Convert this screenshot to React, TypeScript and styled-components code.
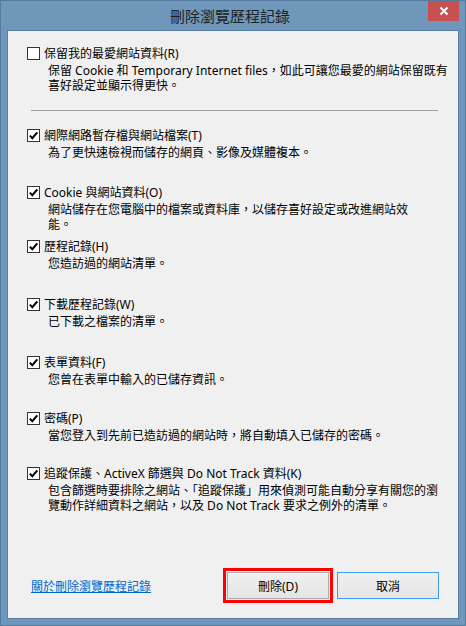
import React from "react";
import styled, { createGlobalStyle } from "styled-components";

const GlobalStyle = createGlobalStyle`
    html, body {
        margin: 0;
        padding: 0;
        background: #ffffff;
    }
    body {
        font-family: "Noto Sans", "Noto Sans CJK TC", sans-serif;
    }
`

const Window = styled.div`
    width: 466px;
    height: 626px;
    box-sizing: border-box;
    border: 1px solid #557a9f;
    background: #6f97bc;
    display: flex;
    flex-direction: column;
`

const TitleBar = styled.div`
    height: 29px;
    display: grid;
    grid-template-columns: 1fr auto 1fr;
    padding-right: 6px;
`

const Title = styled.div`
    grid-column: 2;
    font-family: "Noto Sans CJK TC", sans-serif;
    font-size: 15px;
    line-height: 29px;
    color: #222;
`

const CloseButton = styled.div`
    grid-column: 3;
    justify-self: end;
    width: 31px;
    height: 20px;
    background: #c75050;
    display: flex;
    align-items: center;
    justify-content: center;
`

const Content = styled.div`
    flex: 1;
    margin: 0 6px 6px 6px;
    border: 1px solid #5b80a6;
    background: #f0f0f0;
    padding: 16px 19px 19px 19px;
    display: flex;
    flex-direction: column;
    font-size: 12px;
    color: #000;
`

const Item = styled.div<{ $h?: number }>`
    height: ${p => (p.$h ? `${p.$h}px` : "auto")};
    display: flex;
    flex-direction: column;
`

const LabelRow = styled.label`
    display: flex;
    align-items: center;
    gap: 4px;
    height: 13px;
    line-height: 13px;
    white-space: nowrap;
`

const Box = styled.span`
    width: 13px;
    height: 13px;
    box-sizing: border-box;
    border: 1px solid #333;
    background: #fff;
    display: flex;
    align-items: center;
    justify-content: center;
    flex-shrink: 0;
`

const Desc = styled.div`
    margin: 3px 0 0 21px;
    line-height: 15px;
    white-space: nowrap;
`

const Separator = styled.div`
    height: 1px;
    background: #a0a0a0;
    margin: 17px 1px 18px 4px;
`

const Footer = styled.div`
    margin-top: auto;
    display: flex;
    align-items: center;
    padding-left: 4px;
`

const Link = styled.a`
    color: #0066cc;
    text-decoration: underline;
    cursor: pointer;
    margin-right: auto;
`

const Button = styled.button<{ $focus?: boolean; $marked?: boolean }>`
    width: 102px;
    height: 27px;
    box-sizing: border-box;
    font-family: "Noto Sans", "Noto Sans CJK TC", sans-serif;
    font-size: 12px;
    color: #000;
    border: 1px solid ${p => (p.$focus ? "#3c9cf0" : "#acacac")};
    background: linear-gradient(#f0f0f0, #e5e5e5);
    margin-left: 8px;
    padding: 0;
    outline: ${p => (p.$marked ? "3px solid #ff0000" : "none")};
    outline-offset: 1px;
`

const Check = () => (
    <svg width="11" height="11" viewBox="0 0 11 11">
        <path d="M1.8 5.6 L4.3 8.2 L9.3 2.4" fill="none" stroke="#000" strokeWidth="2" />
    </svg>
)

const CheckItem = ({ checked, label, lines, h }: { checked: boolean; label: string; lines: string[]; h?: number }) => (
    <Item $h={h}>
        <LabelRow>
            <Box>{checked && <Check />}</Box>
            {label}
        </LabelRow>
        <Desc>
            {lines.map((l, i) => (
                <div key={i}>{l}</div>
            ))}
        </Desc>
    </Item>
)

const items = [
    { label: '網際網路暫存檔與網站檔案(T)', lines: ['為了更快速檢視而儲存的網頁、影像及媒體複本。'], h: 57 },
    { label: 'Cookie 與網站資料(O)', lines: ['網站儲存在您電腦中的檔案或資料庫，以儲存喜好設定或改進網站效', '能。'], h: 54 },
    { label: '歷程記錄(H)', lines: ['您造訪過的網站清單。'], h: 58 },
    { label: '下載歷程記錄(W)', lines: ['已下載之檔案的清單。'], h: 58 },
    { label: '表單資料(F)', lines: ['您曾在表單中輸入的已儲存資訊。'], h: 56 },
    { label: '密碼(P)', lines: ['當您登入到先前已造訪過的網站時，將自動填入已儲存的密碼。'], h: 55 },
    { label: '追蹤保護、ActiveX 篩選與 Do Not Track 資料(K)', lines: ['包含篩選時要排除之網站、「追蹤保護」用來偵測可能自動分享有關您的瀏', '覽動作詳細資料之網站，以及 Do Not Track 要求之例外的清單。'] },
]

const App = () => {
    return (
        <>
            <GlobalStyle />
            <Window>
                <TitleBar>
                    <Title>刪除瀏覽歷程記錄</Title>
                    <CloseButton>
                        <svg width="10" height="10" viewBox="0 0 10 10">
                            <path d="M1.5 1.5 L8.5 8.5 M8.5 1.5 L1.5 8.5" stroke="#fff" strokeWidth="2" />
                        </svg>
                    </CloseButton>
                </TitleBar>
                <Content>
                    <CheckItem
                        checked={false}
                        label="保留我的最愛網站資料(R)"
                        lines={['保留 Cookie 和 Temporary Internet files，如此可讓您最愛的網站保留既有', '喜好設定並顯示得更快。']}
                    />
                    <Separator />
                    {items.map(it => (
                        <CheckItem key={it.label} checked label={it.label} lines={it.lines} h={it.h} />
                    ))}
                    <Footer>
                        <Link>關於刪除瀏覽歷程記錄</Link>
                        <Button $marked>刪除(D)</Button>
                        <Button $focus>取消</Button>
                    </Footer>
                </Content>
            </Window>
        </>
    )
}

export default App;
